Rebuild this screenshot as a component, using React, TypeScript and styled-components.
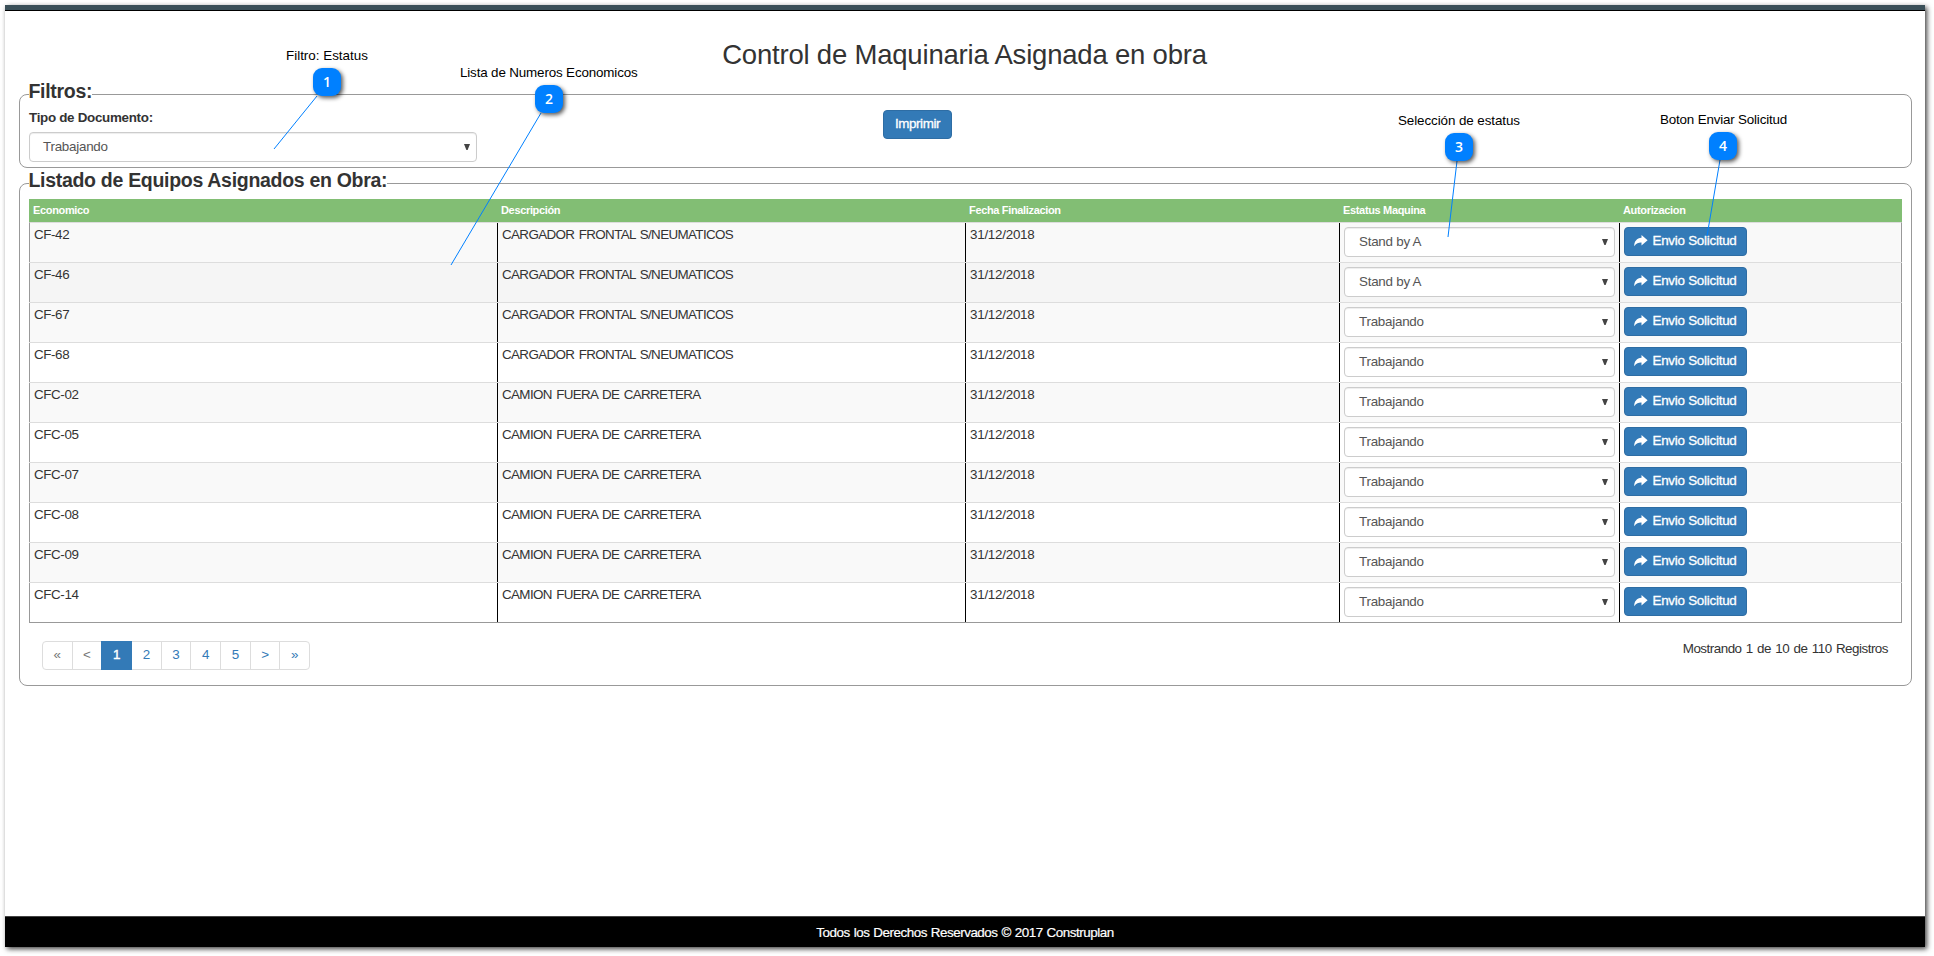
import React from 'react';
import styled, { createGlobalStyle } from 'styled-components';

const GlobalStyle = createGlobalStyle`
  * { box-sizing: border-box; }
  body { margin: 0; background: #fff; overflow: hidden; }
`;

const Stage = styled.div`
  position: relative;
  width: 1934px;
  height: 956px;
  padding: 5px 9px 9px 5px;
  font-family: 'Liberation Sans', Arial, sans-serif;
  font-size: 13.4px;
  line-height: 20px;
  color: #333;
`;

const Page = styled.div`
  display: flex;
  flex-direction: column;
  width: 1920px;
  height: 942px;
  background: #fff;
  box-shadow: 2px 2px 5px rgba(0, 0, 0, 0.75);
`;

const TopBar = styled.header`
  flex: none;
  height: 6px;
  background: #3a4f58;
  border-bottom: 1px solid #000;
`;

const Main = styled.main`
  flex: 1;
  display: flex;
  flex-direction: column;
  padding: 28px 13px 0 14px;
`;

const Title = styled.h1`
  margin: 0 2px 0 0;
  height: 30px;
  font-size: 27.5px;
  line-height: 32px;
  font-weight: 400;
  text-align: center;
  letter-spacing: -0.2px;
`;

const Panel = styled.section<{ $top: number; $height: number }>`
  flex: none;
  display: flex;
  flex-direction: column;
  margin-top: ${(p) => p.$top}px;
  height: ${(p) => p.$height}px;
  padding: 0 9px;
  border: 1px solid #999;
  border-radius: 8px;
`;

const Legend = styled.h2`
  align-self: flex-start;
  flex: none;
  margin: -15px 0 0;
  height: 24px;
  background: #fff;
  font-size: 19.5px;
  line-height: 22px;
  font-weight: 700;
  letter-spacing: -0.3px;
  text-indent: -0.5px;
`;

const FilterRow = styled.div`
  display: flex;
  align-items: flex-start;
`;

const Field = styled.div`
  width: 448px;
  padding-top: 3px;
`;

const Label = styled.label`
  display: block;
  height: 25px;
  line-height: 22px;
  font-weight: 700;
  letter-spacing: -0.3px;
`;

const SelectBox = styled.div`
  display: flex;
  align-items: center;
  justify-content: space-between;
  height: 30px;
  padding: 0 6px 1px 14px;
  border: 1px solid #ccc;
  border-radius: 4px;
  background: #fff;
  box-shadow: inset 0 1px 1px rgba(0, 0, 0, 0.075);
  color: #555;
  letter-spacing: -0.25px;
`;

const FilterSelect = styled(SelectBox)`
  padding-left: 13px;
`;

const Arrow = styled.svg`
  display: block;
  width: 6px;
  height: 6px;
  fill: #444;
`;

const Button = styled.button`
  display: flex;
  align-items: center;
  justify-content: center;
  gap: 4px;
  height: 29px;
  padding: 0 0 2px;
  border: 1px solid #2e6da4;
  border-radius: 4px;
  background: #337ab7;
  color: #fff;
  font: 400 13.4px 'Liberation Sans', Arial, sans-serif;
  letter-spacing: -0.25px;
  -webkit-text-stroke: 0.3px #fff;
  svg { display: block; }
`;

const PrintButton = styled(Button)`
  width: 69px;
  margin: 6px 0 0 406px;
  letter-spacing: -0.4px;
`;

const SendButton = styled(Button)`
  width: 123px;
`;

const Table = styled.div`
  flex: none;
  margin-top: 6px;
  width: 1873px;
`;

const HeadRow = styled.div`
  display: grid;
  grid-template-columns: 468px 468px 374px 280px 283px;
  height: 23px;
  background: #82be74;
  color: #fff;
  font-size: 11px;
  line-height: 23px;
  font-weight: 700;
  letter-spacing: -0.34px;
`;

const HeadCell = styled.div`
  padding-left: 4px;
`;

const Body = styled.div`
  border: 1px solid #999;
  border-top: 1px solid #ddd;
`;

const Row = styled.div<{ $bg: string }>`
  display: grid;
  grid-template-columns: 468px 468px 374px 280px 1fr;
  height: 40px;
  margin: 0 -1px;
  padding: 0 1px;
  background: ${(p) => p.$bg};
  background-clip: content-box;
  border-bottom: 1px solid #ddd;
  &:last-child { height: 39px; border-bottom: 0; }
`;

const Cell = styled.div`
  height: 100%;
  padding: 4px 5px 0 4px;
  & + & { border-left: 1px solid #000; margin-left: -1px; }
`;

const CellText = styled.div<{ $spacing: number }>`
  margin-top: -2px;
  line-height: 20px;
  letter-spacing: ${(p) => p.$spacing}px;
  word-spacing: 1.2px;
`;

const PagerRow = styled.div`
  display: flex;
  justify-content: space-between;
  padding: 18px 14px 0 13px;
`;

const Pager = styled.nav`
  display: flex;
  width: 268px;
  height: 29px;
`;

const PageLink = styled.a<{ $active?: boolean }>`
  flex: 1;
  text-align: center;
  line-height: 26px;
  border: 1px solid ${(p) => (p.$active ? '#337ab7' : '#ddd')};
  background: ${(p) => (p.$active ? '#337ab7' : '#fff')};
  color: ${(p) => (p.$active ? '#fff' : '#337ab7')};
  -webkit-text-stroke: ${(p) => (p.$active ? '0.4px #fff' : '0')};
  & + & { margin-left: -1px; }
  position: relative;
  z-index: ${(p) => (p.$active ? 1 : 0)};
  &:first-child { border-radius: 4px 0 0 4px; color: #777; }
  &:nth-child(2) { color: #777; }
  &:last-child { border-radius: 0 4px 4px 0; }
`;

const Summary = styled.div`
  margin-top: -3px;
  line-height: 22px;
  letter-spacing: -0.5px;
  word-spacing: 1.1px;
`;

const Footer = styled.footer`
  flex: none;
  height: 31px;
  background: #000;
  border-top: 1px solid #444;
  color: #fff;
  text-align: center;
  line-height: 31px;
  letter-spacing: -0.46px;
  word-spacing: 0.6px;
  -webkit-text-stroke: 0.2px #fff;
`;

const Lines = styled.svg`
  position: absolute;
  left: 0;
  top: 0;
  stroke: #0080ff;
  stroke-width: 1;
`;

const Badge = styled.div`
  position: absolute;
  width: 28px;
  height: 28px;
  border-radius: 9px;
  background: #0080ff;
  box-shadow: 2px 2px 4px rgba(0, 0, 0, 0.65);
  color: #fff;
  font: 600 14px/28px 'Open Sans', sans-serif;
  text-align: center;
`;

const Note = styled.div<{ $spacing: number }>`
  position: absolute;
  color: #000;
  white-space: nowrap;
  letter-spacing: ${(p) => p.$spacing}px;
`;

const rows: [string, string, string][] = [
  ['CF-42', 'CARGADOR FRONTAL S/NEUMATICOS', 'Stand by A'],
  ['CF-46', 'CARGADOR FRONTAL S/NEUMATICOS', 'Stand by A'],
  ['CF-67', 'CARGADOR FRONTAL S/NEUMATICOS', 'Trabajando'],
  ['CF-68', 'CARGADOR FRONTAL S/NEUMATICOS', 'Trabajando'],
  ['CFC-02', 'CAMION FUERA DE CARRETERA', 'Trabajando'],
  ['CFC-05', 'CAMION FUERA DE CARRETERA', 'Trabajando'],
  ['CFC-07', 'CAMION FUERA DE CARRETERA', 'Trabajando'],
  ['CFC-08', 'CAMION FUERA DE CARRETERA', 'Trabajando'],
  ['CFC-09', 'CAMION FUERA DE CARRETERA', 'Trabajando'],
  ['CFC-14', 'CAMION FUERA DE CARRETERA', 'Trabajando'],
];

const notes = [
  { text: 'Filtro: Estatus', x: 286, y: 46, spacing: 0, bx: 313, by: 68, line: [317, 96, 274, 149] },
  { text: 'Lista de Numeros Economicos', x: 460, y: 63, spacing: -0.15, bx: 535, by: 85, line: [541, 113, 451, 265] },
  { text: 'Selección de estatus', x: 1398, y: 111, spacing: -0.08, bx: 1445, by: 133, line: [1457, 161, 1448, 237] },
  { text: 'Boton Enviar Solicitud', x: 1660, y: 110, spacing: -0.18, bx: 1709, by: 132, line: [1720, 160, 1707, 236] },
];

const rowColor = (i: number) => (i === 1 ? '#f5f5f5' : i % 2 === 0 ? '#f9f9f9' : '#fff');

function Caret() {
  return <Arrow viewBox="0 0 6 6"><path d="M0 0h6L3.600 6H2.400z" /></Arrow>;
}

function ShareIcon() {
  return (
    <svg width="14" height="12" viewBox="0 0 14 12" fill="#fff">
      <path d="M7.500 0 13.600 5.200 7.500 10.400V7.600C4.600 7.500 2.600 8.200.3 11.200 0 6.800 2.800 3 7.500 2.800z" />
    </svg>
  );
}

export default function App() {
  return (
    <Stage>
      <GlobalStyle />
      <Page>
        <TopBar />
        <Main>
          <Title>Control de Maquinaria Asignada en obra</Title>
          <Panel $top={25} $height={74}>
            <Legend>Filtros:</Legend>
            <FilterRow>
              <Field>
                <Label>Tipo de Documento:</Label>
                <FilterSelect>Trabajando<Caret /></FilterSelect>
              </Field>
              <PrintButton>Imprimir</PrintButton>
            </FilterRow>
          </Panel>
          <Panel $top={15} $height={503}>
            <Legend>Listado de Equipos Asignados en Obra:</Legend>
            <Table>
              <HeadRow>
                {['Economico', 'Descripción', 'Fecha Finalizacion', 'Estatus Maquina', 'Autorizacion'].map((h) => (
                  <HeadCell key={h}>{h}</HeadCell>
                ))}
              </HeadRow>
              <Body>
                {rows.map(([id, description, status], i) => (
                  <Row key={id} $bg={rowColor(i)}>
                    <Cell><CellText $spacing={-0.4}>{id}</CellText></Cell>
                    <Cell><CellText $spacing={-0.62}>{description}</CellText></Cell>
                    <Cell><CellText $spacing={-0.25}>31/12/2018</CellText></Cell>
                    <Cell><SelectBox>{status}<Caret /></SelectBox></Cell>
                    <Cell><SendButton><ShareIcon />Envio Solicitud</SendButton></Cell>
                  </Row>
                ))}
              </Body>
            </Table>
            <PagerRow>
              <Pager>
                {['«', '<', '1', '2', '3', '4', '5', '>', '»'].map((p) => (
                  <PageLink key={p} $active={p === '1'}>{p}</PageLink>
                ))}
              </Pager>
              <Summary>Mostrando 1 de 10 de 110 Registros</Summary>
            </PagerRow>
          </Panel>
        </Main>
        <Footer>Todos los Derechos Reservados © 2017 Construplan</Footer>
      </Page>
      <Lines width="1934" height="956">
        {notes.map(({ text, line: [x1, y1, x2, y2] }) => (
          <line key={text} x1={x1} y1={y1} x2={x2} y2={y2} />
        ))}
      </Lines>
      {notes.map((n, i) => (
        <React.Fragment key={n.text}>
          <Note $spacing={n.spacing} style={{ left: n.x, top: n.y }}>{n.text}</Note>
          <Badge style={{ left: n.bx, top: n.by }}>{i + 1}</Badge>
        </React.Fragment>
      ))}
    </Stage>
  );
}
